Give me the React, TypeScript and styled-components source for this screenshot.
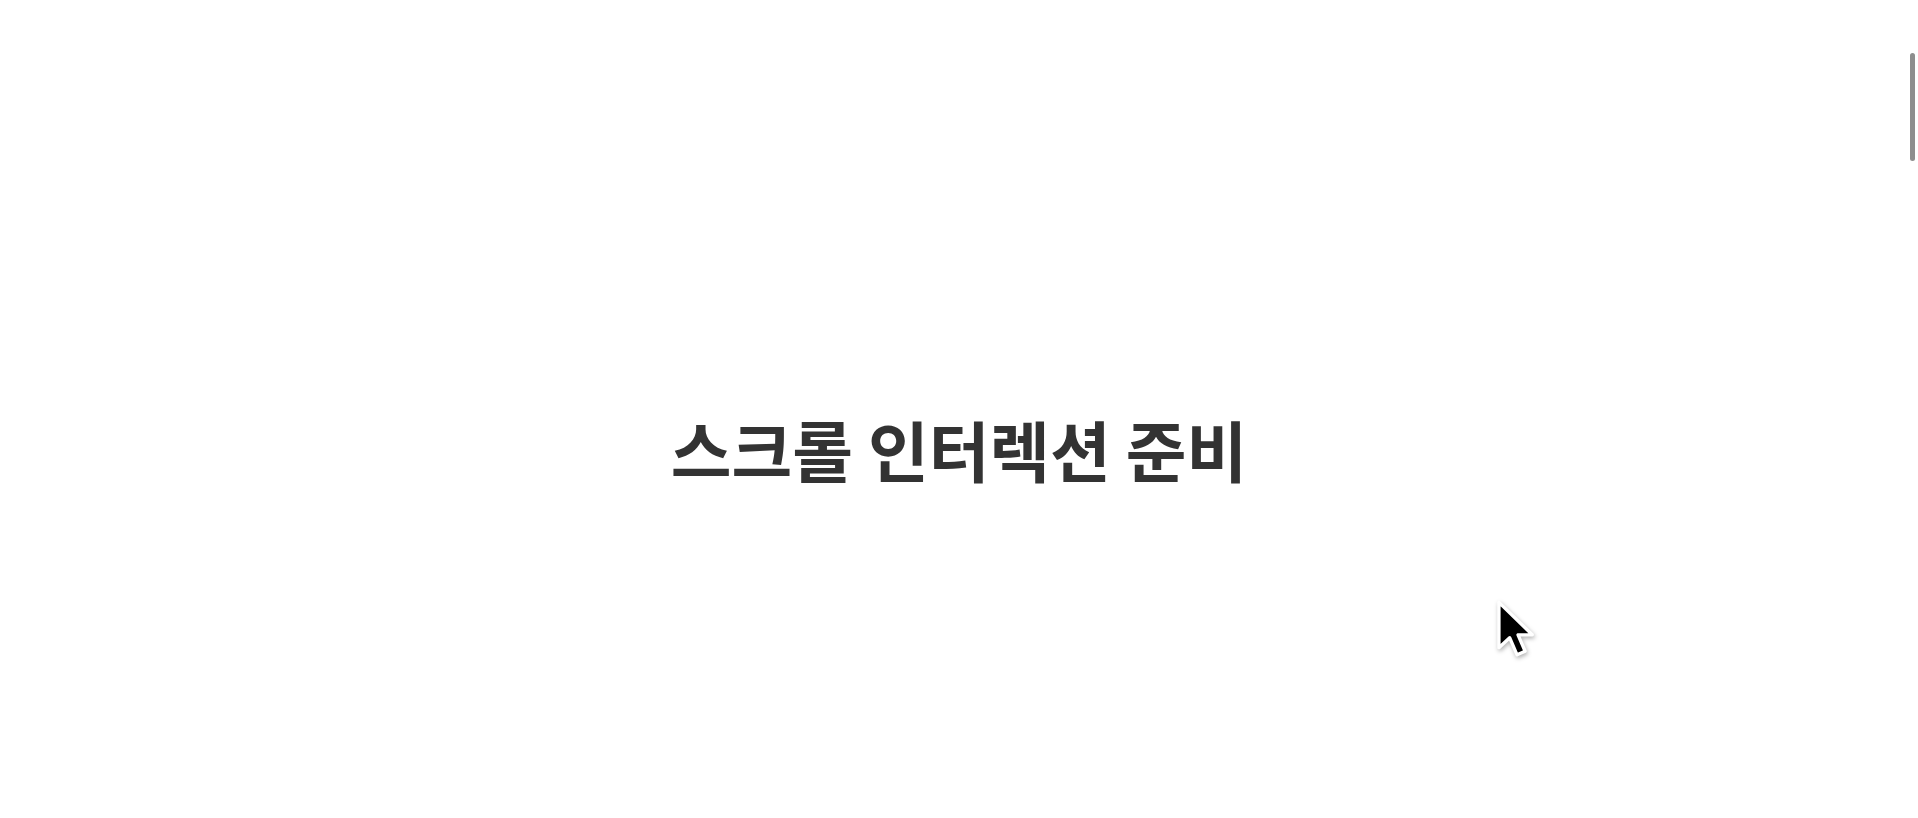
import React from 'react';
import styled, { createGlobalStyle } from 'styled-components';

const GlobalStyle = createGlobalStyle`
  html, body {
    margin: 0;
    padding: 0;
    background: #ffffff;
    overflow: hidden;
  }
  body {
    font-family: "Noto Sans CJK KR", "Noto Sans", sans-serif;
  }
`;

const Stage = styled.section`
  height: 100vh;
  box-sizing: border-box;
  padding-top: 78px;
  display: flex;
  align-items: center;
  justify-content: center;
`;

const Title = styled.h1`
  margin: 0;
  font-size: 66px;
  font-weight: 700;
  color: #333333;
  letter-spacing: 0;
`;

// overlay scrollbar thumb (page is mid-scroll)
const ScrollThumb = styled.div`
  position: fixed;
  top: 53px;
  right: 3px;
  width: 5px;
  height: 108px;
  border-radius: 3px;
  background: #8e8e8e;
`;

const Cursor = styled.svg`
  position: fixed;
  left: 1494px;
  top: 600px;
  width: 48px;
  height: 62px;
  pointer-events: none;
  filter: drop-shadow(1px 2px 2px rgba(0, 0, 0, 0.3));
`;

const App: React.FC = () => {
  return (
    <>
      <GlobalStyle />
      <Stage>
        <Title>스크롤 인터렉션 준비</Title>
      </Stage>
      <ScrollThumb />
      <Cursor viewBox="0 0 20 26">
        <path
          d="M2 1 L2 20 L6.5 15.8 L9.6 23 L13 21.5 L10 14.6 L16 14.6 Z"
          fill="#000"
          stroke="#fff"
          strokeWidth="1.4"
          strokeLinejoin="round"
        />
      </Cursor>
    </>
  );
};

export default App;
